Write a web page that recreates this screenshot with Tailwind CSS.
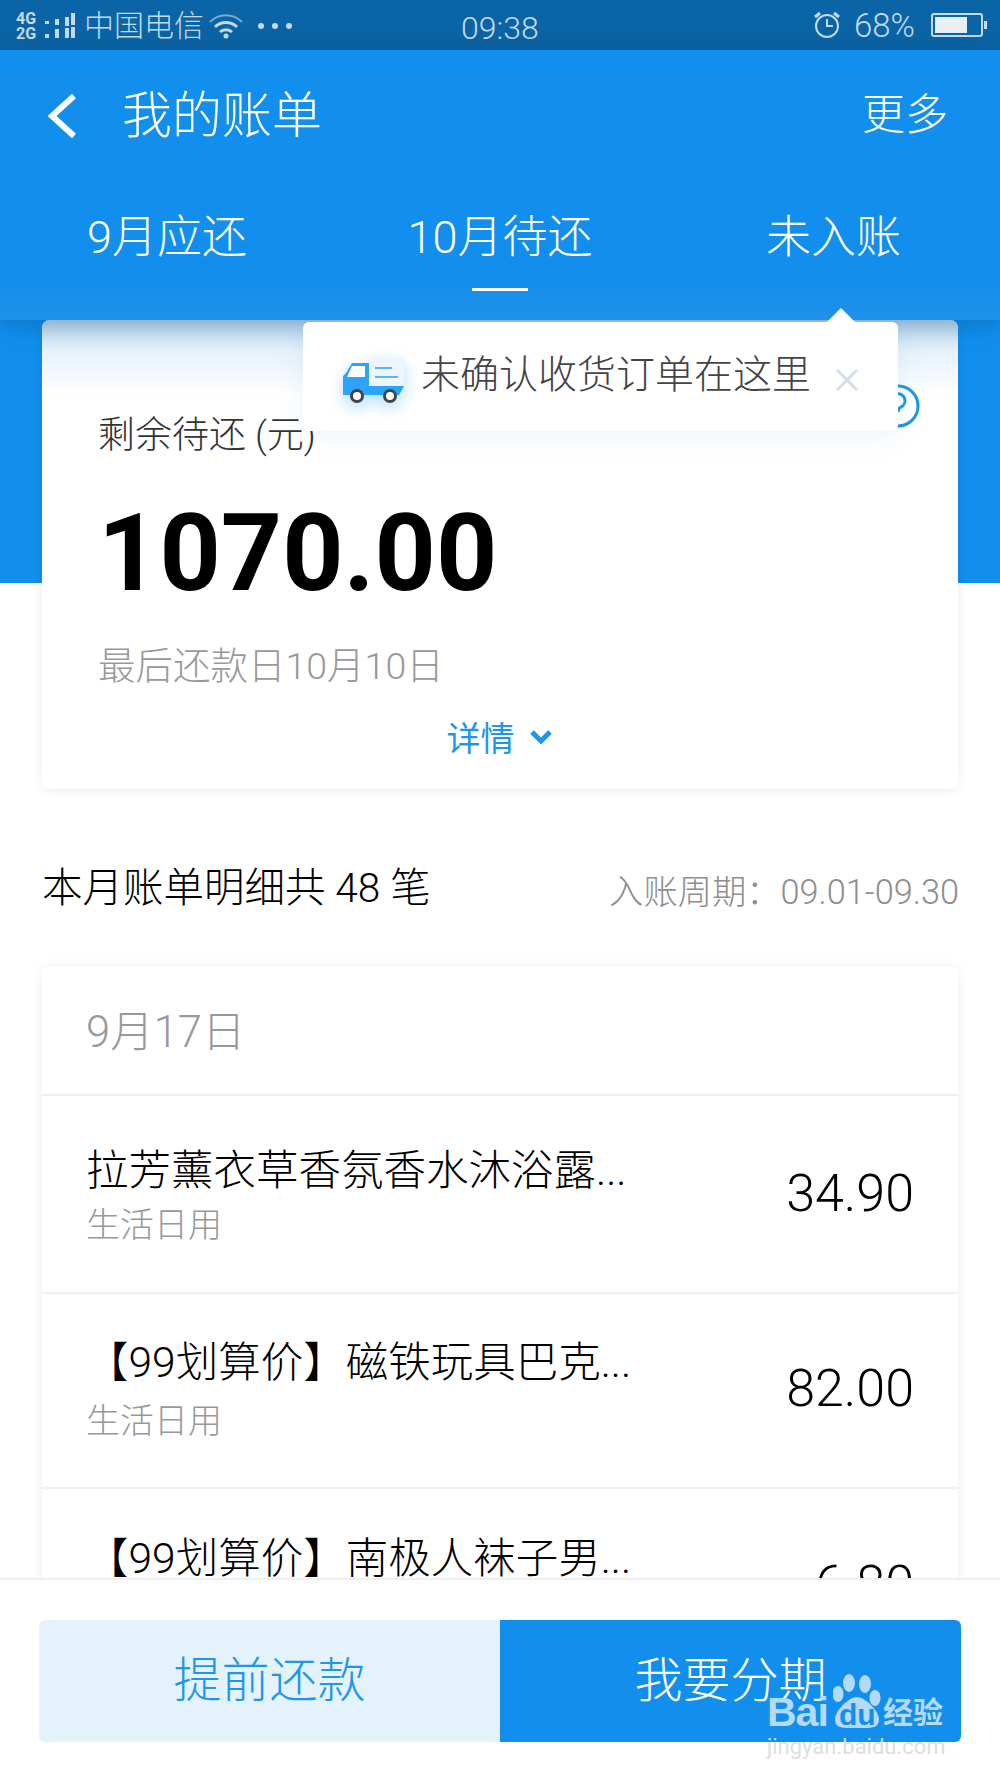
<!DOCTYPE html>
<html lang="en">
<head>
    <meta charset="UTF-8">
    <title>我的账单</title>
    <script src="https://cdn.jsdelivr.net/npm/@tailwindcss/browser@4"></script>
</head>
<body class="bg-white">
<div class="relative w-[1000px] h-[1778px] overflow-hidden flex flex-col bg-white font-['Roboto','Noto_Sans_CJK_SC',sans-serif]">

    <!-- status bar -->
    <div class="h-[50px] bg-[#0b64a5] flex items-center justify-between pl-4 pr-4 text-[#c5dbea] font-light relative">
        <div class="flex items-center text-[30px] mt-[1px]">
            <div class="text-[16px] leading-[15px] font-bold w-[29px]">4G<br>2G</div>
            <svg width="30" height="30" viewBox="0 0 30 30" fill="#c5dbea" class="mr-[9px]">
                <rect x="0" y="10" width="4" height="3"/><rect x="0" y="23" width="4" height="4"/>
                <rect x="10" y="8" width="4" height="6"/><rect x="10" y="18" width="4" height="9"/>
                <rect x="20" y="6" width="4" height="9"/><rect x="20" y="17" width="4" height="10"/>
                <rect x="26" y="2" width="4" height="12"/><rect x="26" y="16" width="4" height="11"/>
            </svg>
            <span class="leading-none">中国电信</span>
            <svg width="36" height="30" viewBox="0 0 36 30" fill="none" stroke="#c5dbea" class="ml-1">
                <path d="M2 11C11 2 25 2 34 11" stroke-width="2" opacity=".6"/>
                <path d="M7 16C13 10 23 10 29 16" stroke-width="3"/>
                <path d="M12 21C15 18 21 18 24 21" stroke-width="3"/>
                <circle cx="18" cy="25" r="2.5" fill="#c5dbea" stroke="none"/>
            </svg>
            <div class="flex gap-[8px] ml-[14px]">
                <div class="w-[6px] h-[6px] rounded-full bg-[#c5dbea]"></div>
                <div class="w-[6px] h-[6px] rounded-full bg-[#c5dbea]"></div>
                <div class="w-[6px] h-[6px] rounded-full bg-[#c5dbea]"></div>
            </div>
        </div>
        <span class="absolute left-[461px] top-[10px] text-[32px] leading-[36px]">09:38</span>
        <div class="flex items-center pr-[1px] text-[33px]">
            <svg width="28" height="28" viewBox="0 0 28 28" fill="none" stroke="#c5dbea" stroke-width="2">
                <circle cx="14" cy="15" r="11"/>
                <path d="M14 8v7h6"/>
                <path d="M2 6l5-4M26 6l-5-4" stroke-width="3"/>
            </svg>
            <span class="ml-[13px] leading-none">68%</span>
            <div class="ml-[16px] w-[52px] h-[24px] border-2 border-[#c5dbea] rounded-[3px] p-[2px] relative">
                <div class="h-full w-[32px] bg-[#e8f0f6]"></div>
                <div class="absolute -right-[6px] top-[6px] w-[3px] h-[8px] bg-[#c5dbea]"></div>
            </div>
        </div>
    </div>

    <!-- header and tabs -->
    <div class="relative z-10 h-[270px] shrink-0 bg-[linear-gradient(180deg,#128eec_0%,#128eec_85%,#2192e9_100%)] text-white font-light shadow-[0_4px_22px_rgba(10,70,120,0.35)]">
        <div class="h-[115px] pt-[16px] flex items-center justify-between pl-[46px] pr-[52px]">
            <div class="flex items-center">
                <svg width="30" height="44" viewBox="0 0 30 44" fill="none" stroke="white" stroke-width="6">
                    <path d="M28 2L6 22L28 42"/>
                </svg>
                <span class="ml-[46px] text-[50px] leading-none">我的账单</span>
            </div>
            <span class="text-[43px] leading-none">更多</span>
        </div>
        <div class="flex text-[45px] leading-none mt-[50px]">
            <div class="w-[334px] text-center">9月应还</div>
            <div class="w-[334px] -ml-[1px] text-center relative">10月待还
                <div class="absolute left-[139px] top-[73px] w-[56px] h-[3px] bg-white"></div>
            </div>
            <div class="w-[333px] text-center">未入账</div>
        </div>
    </div>

    <!-- content -->
    <div class="relative flex-1 overflow-hidden">
        <div class="absolute left-0 top-0 w-full h-[263px] bg-[#128eec]"></div>

        <div class="relative px-[42px]">
            <!-- balance card -->
            <div class="relative h-[469px] bg-white rounded-[8px] shadow-[0_2px_12px_rgba(0,0,0,0.08)] overflow-hidden">
                <div class="absolute left-0 top-0 w-full h-[76px] bg-[linear-gradient(180deg,#b9d7ef_0%,#e6f1fa_40%,#ffffff_100%)]"></div>
                <div class="relative pl-[56px] pt-[94px] text-[#333] text-[37px] leading-[44px] font-light">剩余待还 (元)</div>
                <div class="relative pl-[56px] mt-[43px] text-[107px] leading-[106px] font-bold text-black">1070.00</div>
                <div class="relative pl-[56px] mt-[37px] text-[37.5px] leading-[44px] text-[#999] font-light">最后还款日10月10日</div>
                <div class="relative flex items-center justify-center mt-[29px] text-[34px] leading-[44px] text-[#1d96ec] pr-[2px]">
                    详情
                    <svg width="22" height="15" viewBox="0 0 22 15" fill="none" stroke="#1d96ec" stroke-width="5" class="ml-[15px] mb-[4px]">
                        <path d="M2 2L11 11L20 2"/>
                    </svg>
                </div>
            </div>

            <!-- list heading -->
            <div class="flex items-center justify-between h-[88px] mt-[52px] pt-[6px] font-light">
                <span class="text-[40.5px] text-black leading-none">本月账单明细共 48 笔</span>
                <span class="text-[34.3px] text-[#8e8e8e] leading-none mt-[8px] -mr-[1px]">入账周期：09.01-09.30</span>
            </div>

            <!-- list card -->
            <div class="mt-[37px] bg-white rounded-[8px] shadow-[0_2px_14px_rgba(0,0,0,0.08)] font-light">
                <div class="h-[130px] pl-[44px] pt-[6px] flex items-center text-[43.5px] text-[#999] border-b-2 border-[#efefef]">9月17日</div>
                <div class="h-[198px] pl-[44px] pr-[44px] flex items-center justify-between border-b-2 border-[#efefef]">
                    <div class="mt-[5px]">
                        <div class="text-[42.5px] leading-[52px] text-black">拉芳薰衣草香氛香水沐浴露...</div>
                        <div class="text-[34px] leading-[46px] text-[#999] mt-[5px]">生活日用</div>
                    </div>
                    <div class="text-[52px] text-black leading-none">34.90</div>
                </div>
                <div class="h-[195px] pl-[44px] pr-[44px] flex items-center justify-between border-b-2 border-[#efefef]">
                    <div>
                        <div class="text-[42.5px] leading-[52px] text-black">【99划算价】磁铁玩具巴克...</div>
                        <div class="text-[34px] leading-[46px] text-[#999] mt-[9px]">生活日用</div>
                    </div>
                    <div class="text-[52px] text-black leading-none mb-[4px]">82.00</div>
                </div>
                <div class="h-[195px] pl-[44px] pr-[44px] flex items-center justify-between">
                    <div>
                        <div class="text-[42.5px] leading-[52px] text-black">【99划算价】南极人袜子男...</div>
                        <div class="text-[34px] leading-[46px] text-[#999] mt-[9px]">生活日用</div>
                    </div>
                    <div class="text-[52px] text-black leading-none mb-[4px]">6.80</div>
                </div>
            </div>
        </div>

        <svg width="44" height="44" viewBox="0 0 44 44" fill="none" stroke="#1d96ec" stroke-width="3" class="absolute left-[876px] top-[64px]">
            <circle cx="22" cy="22" r="20"/>
            <path d="M15 17a7 7 0 1 1 10 6c-2 1-3 2-3 5"/>
        </svg>
    </div>

    <!-- tip popover -->
    <div class="absolute z-20 left-[303px] top-[322px] w-[595px] h-[109px] bg-white rounded-[6px] flex items-center shadow-[0_6px_30px_rgba(30,100,180,0.08)]">
        <div class="absolute left-[524px] -top-[14px] w-0 h-0 border-x-[14px] border-x-transparent border-b-[14px] border-b-white"></div>
        <svg width="62" height="46" viewBox="0 0 62 46" class="ml-[40px] self-start mt-[35px] shrink-0 drop-shadow-[0_6px_8px_rgba(44,164,252,0.35)]">
            <rect x="26" y="0" width="35" height="29" fill="#eef6fd"/>
            <path d="M32 11h17M32 20h23" stroke="#58b4fb" stroke-width="2"/>
            <path d="M26 6H9L3 16L0 19V38H56L61 29H26Z" fill="#2ca4fc"/>
            <path d="M9 9h13v11H4Z" fill="#fff"/>
            <circle cx="14" cy="39" r="5.5" fill="#fff" stroke="#444" stroke-width="3"/>
            <circle cx="47" cy="39" r="5.5" fill="#fff" stroke="#444" stroke-width="3"/>
        </svg>
        <span class="ml-[16px] mb-[2px] text-[39px] text-[#444] font-light leading-none whitespace-nowrap">未确认收货订单在这里</span>
        <svg width="22" height="22" viewBox="0 0 22 22" fill="none" stroke="#d2e0ea" stroke-width="3" class="ml-[25px] mt-[6px]">
            <path d="M1 1L21 21M21 1L1 21"/>
        </svg>
    </div>

    <!-- bottom buttons -->
    <div class="relative z-10 h-[200px] shrink-0 bg-white border-t-2 border-[#efefef] px-[39px] pt-[40px]">
        <div class="flex h-[122px] text-[48px] font-light">
            <div class="w-[461px] bg-[#e4f3fb] rounded-l-[6px] text-[#1d96ec] flex items-center justify-center">提前还款</div>
            <div class="w-[461px] bg-[#128eec] rounded-r-[6px] text-white flex items-center justify-center">我要分期</div>
        </div>
    </div>

    <!-- watermark -->
    <div class="absolute z-30 left-[766px] top-[1672px] w-[182px] h-[86px]">
        <svg width="50" height="58" viewBox="0 0 50 58" fill="#b5daf7" class="absolute left-[67px] top-[1px]">
            <ellipse cx="5" cy="21" rx="5.5" ry="8"/>
            <ellipse cx="16" cy="10" rx="6" ry="9"/>
            <ellipse cx="32" cy="11" rx="6" ry="9"/>
            <ellipse cx="42" cy="25" rx="5.5" ry="8"/>
            <path d="M24 24C32 24 46 38 46 46C46 56 38 55 24 55C10 55 2 56 2 46C2 38 16 24 24 24Z"/>
        </svg>
        <div class="absolute left-[1px] top-[20px] text-[#b5daf7] text-[41px] leading-[40px] font-bold tracking-[-1px] font-['Liberation_Sans',sans-serif]">Bai</div>
        <div class="absolute left-[73px] top-[28px] text-[#128eec] text-[30px] leading-[30px] font-bold font-['Liberation_Sans',sans-serif]">du</div>
        <div class="absolute left-[117px] top-[24px] text-[#b5daf7] text-[30px] leading-[34px] font-bold">经验</div>
        <div class="absolute left-[1px] top-[64px] text-[#dedede] text-[22px] leading-[22px] whitespace-nowrap">jingyan.baidu.com</div>
    </div>
</div>
</body>
</html>
